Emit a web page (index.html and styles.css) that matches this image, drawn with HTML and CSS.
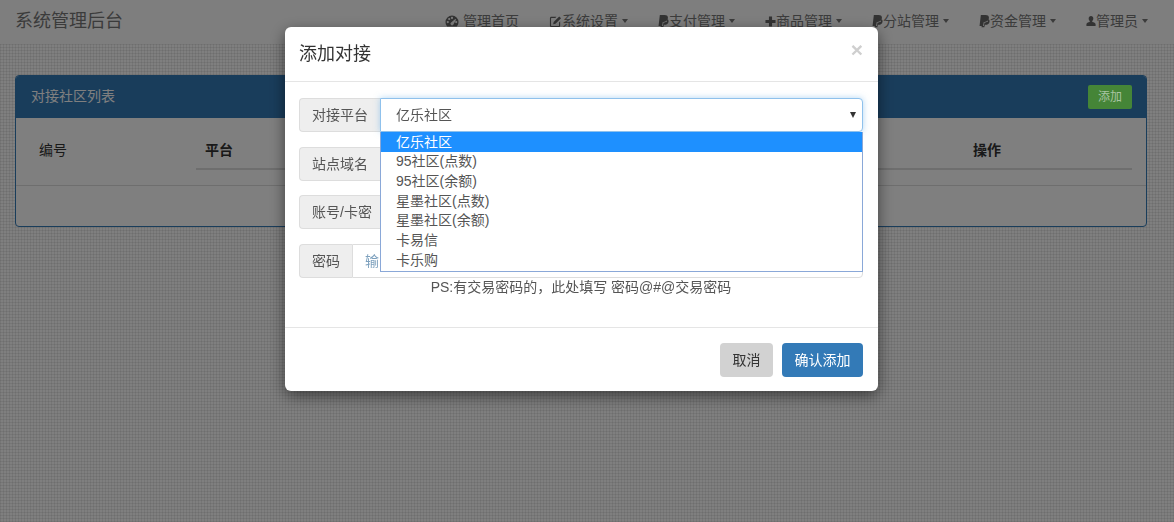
FILE: index.html
```html
<!DOCTYPE html>
<html lang="zh-CN">
<head>
<meta charset="utf-8">
<title>系统管理后台</title>
<link rel="stylesheet" href="styles.css">
</head>
<body>
<header class="navbar">
  <a class="brand">系统管理后台</a>
  <nav class="menu">
    <a class="item"><svg class="icon icon-gauge" viewBox="0 0 14 14"><path d="M7 1.500a6.500 6.500 0 0 0-6.500 6.500c0 1.800.7 3.300 1.700 4.500h9.600c1-1.200 1.700-2.700 1.700-4.500A6.500 6.500 0 0 0 7 1.500zM2.800 9.200a1.100 1.100 0 1 1 0-2.200 1.100 1.100 0 0 1 0 2.200zm1.400-3.100a1.100 1.100 0 1 1 0-2.200 1.100 1.100 0 0 1 0 2.200zM7 5a1.100 1.100 0 1 1 0-2.200A1.100 1.100 0 0 1 7 5zm1.300 5.800a1.600 1.600 0 1 1-1.900-2.500L10.300 5l.8.6zm2.900-1.600a1.100 1.100 0 1 1 0-2.200 1.100 1.100 0 0 1 0 2.200z" fill-rule="evenodd"/></svg><span class="gap">管理首页</span></a>
    <a class="item"><svg class="icon icon-edit" viewBox="0 0 14 14"><path d="M1 3.500C1 2.700 1.700 2 2.500 2H8L6.800 3.200H2.700c-.3 0-.5.200-.5.500v7.600c0 .3.200.5.500.5h7.600c.3 0 .5-.2.500-.5V8l1.200-1.200v4.700c0 .8-.7 1.500-1.500 1.500h-8C1.700 13 1 12.300 1 11.500zM5 7.500 11 1.500l2 2-6 6-2.500.5z"/></svg>系统设置<i class="caret"></i></a>
    <a class="item"><svg class="icon icon-pay" viewBox="1 0 12 14"><path d="M3 .5h5c2.800 0 4.200 1.300 3.800 3.600-.4 2.700-2.300 3.900-4.700 3.900H6.200l-.8 4.500H1.600zM10.300 4.600c1.700.5 2.500 1.600 2.200 3.200-.4 2.300-2.100 3.400-4.300 3.400H7.400l-.6 2.500H3.700l.3-1.200h2.300l.7-3.900h1c2.300 0 3.800-1.300 2.300-4z"/></svg>支付管理<i class="caret"></i></a>
    <a class="item"><svg class="icon icon-plus" viewBox="1 1 12 12"><path d="M5.300 1.500h3.400v3.800h3.800v3.400H8.700v3.800H5.300V8.700H1.500V5.300h3.800z"/></svg>商品管理<i class="caret"></i></a>
    <a class="item"><svg class="icon icon-pay" viewBox="1 0 12 14"><path d="M3 .5h5c2.800 0 4.200 1.300 3.800 3.600-.4 2.700-2.300 3.900-4.700 3.900H6.200l-.8 4.500H1.600zM10.300 4.600c1.700.5 2.500 1.600 2.200 3.200-.4 2.300-2.100 3.400-4.300 3.400H7.400l-.6 2.500H3.700l.3-1.200h2.300l.7-3.900h1c2.300 0 3.800-1.300 2.300-4z"/></svg>分站管理<i class="caret"></i></a>
    <a class="item"><svg class="icon icon-pay" viewBox="1 0 12 14"><path d="M3 .5h5c2.800 0 4.200 1.300 3.800 3.600-.4 2.700-2.300 3.900-4.700 3.900H6.200l-.8 4.500H1.600zM10.300 4.600c1.700.5 2.500 1.600 2.200 3.200-.4 2.300-2.100 3.400-4.300 3.400H7.400l-.6 2.500H3.700l.3-1.200h2.300l.7-3.900h1c2.300 0 3.800-1.300 2.300-4z"/></svg>资金管理<i class="caret"></i></a>
    <a class="item"><svg class="icon icon-user" viewBox="1 1 12 13"><path d="M7 1.500c1.700 0 2.800 1.300 2.800 3.100 0 1.300-.6 2.400-1.300 3v1c2 .5 4 1.200 4 2.600v2.300h-11v-2.300c0-1.400 2-2.100 4-2.600v-1c-.7-.6-1.300-1.700-1.300-3C4.200 2.800 5.300 1.500 7 1.500z"/></svg>管理员<i class="caret"></i></a>
  </nav>
</header>

<main class="page">
  <section class="panel">
    <div class="panel-head">
      <h3 class="panel-title">对接社区列表</h3>
      <a class="btn-add">添加</a>
    </div>
    <div class="panel-body">
      <table class="table">
        <thead>
          <tr>
            <th class="col-id">编号</th>
            <th class="col-platform">平台</th>
            <th class="col-domain"></th>
            <th class="col-action">操作</th>
          </tr>
        </thead>
      </table>
    </div>
    <div class="panel-foot"></div>
  </section>
</main>

<div class="overlay"></div>

<div class="modal">
  <div class="modal-head">
    <h4 class="modal-title">添加对接</h4>
    <span class="close">×</span>
  </div>
  <div class="modal-body">
    <div class="group group-open">
      <span class="addon">对接平台</span>
      <div class="select">亿乐社区<i class="select-arrow"></i>
        <ul class="options">
          <li class="option is-active">亿乐社区</li>
          <li class="option">95社区(点数)</li>
          <li class="option">95社区(余额)</li>
          <li class="option">星墨社区(点数)</li>
          <li class="option">星墨社区(余额)</li>
          <li class="option">卡易信</li>
          <li class="option">卡乐购</li>
        </ul>
      </div>
    </div>
    <div class="group">
      <span class="addon">站点域名</span>
      <div class="field"></div>
    </div>
    <div class="group">
      <span class="addon">账号/卡密</span>
      <div class="field"></div>
    </div>
    <div class="group">
      <span class="addon">密码</span>
      <div class="field placeholder">输</div>
    </div>
    <p class="hint">PS:有交易密码的，此处填写 密码@#@交易密码</p>
  </div>
  <div class="modal-foot">
    <a class="btn btn-cancel">取消</a>
    <a class="btn btn-primary">确认添加</a>
  </div>
</div>
</body>
</html>
```
FILE: styles.css
```css
* { box-sizing: border-box; }
html, body { height: 100%; }
body {
  margin: 0;
  overflow: hidden;
  font-family: "Liberation Sans", "Noto Sans CJK SC", sans-serif;
  font-size: 14px;
  color: #333;
  background-color: #fff;
  background-image:
    repeating-linear-gradient(0deg, rgba(0,0,0,.07) 0 1px, transparent 1px 3px),
    repeating-linear-gradient(90deg, rgba(0,0,0,.07) 0 1px, transparent 1px 3px);
}
.navbar {
  height: 44px;
  display: flex;
  justify-content: space-between;
  background: #fcfcfc;
  padding-right: 11px;
}
.brand {
  padding: 8px 15px 0;
  font-size: 18px;
  line-height: 26px;
  color: #777;
}
.menu { display: flex; }
.item {
  display: flex;
  align-items: center;
  height: 42px;
  padding: 0 15px;
  color: #777;
  line-height: 20px;
  white-space: nowrap;
  font-size: 14px;
}
.icon { fill: #666; flex: none; }
.icon-gauge { width: 14px; height: 14px; }
.icon-edit { width: 13px; height: 13px; }
.icon-pay { width: 11px; height: 14px; }
.icon-plus { width: 11px; height: 11px; }
.icon-user { width: 10px; height: 12px; }
.gap { margin-left: 4px; }
.caret {
  width: 0;
  height: 0;
  margin-left: 4px;
  border-top: 4px solid #777;
  border-left: 3px solid transparent;
  border-right: 3px solid transparent;
}
.page { padding: 31px 27px 0 15px; }
.panel {
  height: 152px;
  background: #fff;
  border: 1px solid #337ab7;
  border-radius: 4px;
  overflow: hidden;
}
.panel-head {
  height: 42px;
  background: #337ab7;
  display: flex;
  align-items: center;
  justify-content: space-between;
  padding: 0 14px 5px 15px;
}
.panel-title {
  margin: 0;
  font-size: 14px;
  font-weight: 400;
  color: #fff;
}
.btn-add {
  position: relative;
  z-index: 1;
  width: 44px;
  height: 24px;
  margin-top: 5px;
  line-height: 24px;
  text-align: center;
  font-size: 12px;
  border-radius: 2px;
  background: #458537;
  color: #a9c4a2;
}
.panel-body {
  height: 68px;
  padding: 15px 14px 0;
  border-bottom: 1px solid #ddd;
}
.table { width: 100%; border-collapse: collapse; table-layout: fixed; }
.table th {
  height: 36px;
  padding: 0 8px 3px 9px;
  text-align: left;
  font-size: 14px;
  color: #333;
  border-bottom: 2px solid #ddd;
}
.table .col-id { width: 166px; font-weight: 400; border-bottom-color: #fff; }
.table .col-action { width: 168px; }
.table .col-domain { width: auto; }
.table .col-platform { width: 200px; }
.overlay {
  position: fixed;
  inset: 0;
  background: rgba(0,0,0,.5);
}
.modal {
  position: fixed;
  left: 285px;
  top: 27px;
  width: 593px;
  height: 364px;
  display: flex;
  flex-direction: column;
  background: #fff;
  border-radius: 6px;
  box-shadow: 0 5px 15px rgba(0,0,0,.5);
}
.modal-head {
  height: 55px;
  flex: none;
  position: relative;
  padding: 15px 14px;
  border-bottom: 1px solid #e5e5e5;
}
.modal-title {
  margin: 0;
  font-size: 18px;
  font-weight: 400;
  line-height: 25px;
  color: #333;
}
.close {
  position: absolute;
  right: 15px;
  top: 11px;
  font-size: 21px;
  font-weight: 700;
  line-height: 24px;
  color: #cfcfcf;
}
.modal-body {
  flex: 1;
  padding: 16px 15px 0 14px;
  display: flex;
  flex-direction: column;
  gap: 14.7px;
}
.group { display: flex; height: 34px; }
.addon {
  flex: none;
  padding: 0 12px;
  line-height: 32px;
  background: #eee;
  border: 1px solid #ddd;
  border-right: 0;
  border-radius: 4px 0 0 4px;
  font-size: 14px;
  color: #555;
  white-space: nowrap;
}
.field, .select {
  flex: 1;
  min-width: 0;
  padding: 0 12px;
  line-height: 32px;
  background: #fff;
  border: 1px solid #ddd;
  border-radius: 0 4px 4px 0;
  font-size: 14px;
  color: #555;
}
.placeholder { color: #7ea1be; }
.select {
  position: relative;
  padding-left: 15px;
  border-color: #8fc1ec;
  box-shadow: 0 0 6px rgba(102,175,233,.5);
}
.select-arrow {
  position: absolute;
  right: 6px;
  top: 13px;
  border-top: 6px solid #333;
  border-left: 3px solid transparent;
  border-right: 3px solid transparent;
}
.options {
  position: absolute;
  left: -1px;
  right: -1px;
  top: 33px;
  margin: 0;
  padding: 0;
  list-style: none;
  background: #fff;
  border: 1px solid #8aa8d8;
  border-top: 0;
  z-index: 2;
}
.option {
  height: 19.800px;
  padding-left: 15px;
  line-height: 19.800px;
  font-size: 14px;
  color: #555;
  white-space: nowrap;
}
.option.is-active { background: #1e90ff; color: #fff; height: 20px; line-height: 20px; }
.hint {
  margin: -16px 0 0;
  text-align: center;
  font-size: 14px;
  line-height: 20px;
  color: #555;
}
.modal-foot {
  height: 64px;
  flex: none;
  display: flex;
  justify-content: flex-end;
  gap: 9px;
  padding: 15px 15px 0 0;
  border-top: 1px solid #e5e5e5;
}
.btn {
  height: 34px;
  padding: 0 12.500px;
  line-height: 34px;
  font-size: 14px;
  border-radius: 4px;
}
.btn-cancel { background: #d2d2d2; color: #333; }
.btn-primary { background: #337ab7; color: #fff; }
```
